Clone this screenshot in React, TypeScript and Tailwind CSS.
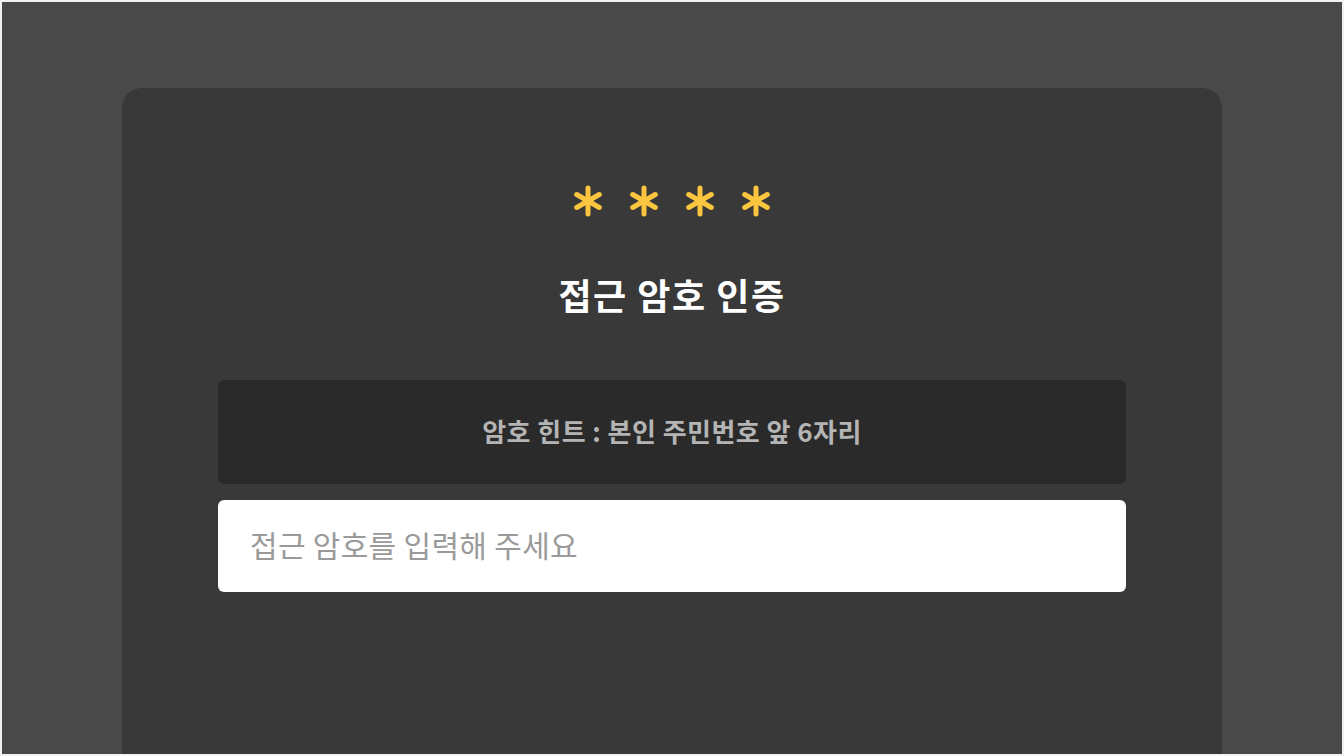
import { useState } from "react";

function Star() {
  return (
    <svg width="32" height="32" viewBox="0 0 32 32" className="text-[#fcc53f]">
      <g stroke="currentColor" strokeWidth="5" strokeLinecap="round">
        <line x1="16" y1="3" x2="16" y2="29" />
        <line x1="4.7" y1="9.5" x2="27.3" y2="22.5" />
        <line x1="4.7" y1="22.5" x2="27.3" y2="9.5" />
      </g>
    </svg>
  );
}

export default function App() {
  const [pw, setPw] = useState("");

  return (
    <div
      className="h-[756px] w-[1344px] overflow-hidden border-2 border-[#f2f2f2] bg-[#494949]"
      style={{ fontFamily: '"Noto Sans CJK KR", "Noto Sans", sans-serif' }}
    >
      <div className="mx-[120px] mt-[86px] h-[700px] rounded-[20px] bg-[#393939] px-[96px] pt-[97px]">
        <div className="flex justify-center gap-[24px]">
          <Star />
          <Star />
          <Star />
          <Star />
        </div>
        <h1 className="mt-[57px] text-center text-[36px] leading-[40px] font-bold tracking-[1.5px] text-white">
          접근 암호 인증
        </h1>
        <div className="mt-[66px] flex h-[104px] items-center justify-center rounded-[6px] bg-[#2a2a2a] pb-[4px]">
          <p className="text-[26px] font-bold tracking-[0.45px] text-[#b4b4b4]">
            암호 힌트 : 본인 주민번호 앞 6자리
          </p>
        </div>
        <input
          type="password"
          value={pw}
          onChange={(e) => setPw(e.target.value)}
          placeholder="접근 암호를 입력해 주세요"
          className="mt-[16px] block h-[92px] w-full rounded-[6px] bg-white px-[32px] pb-[5px] text-[30px] tracking-[0.3px] text-[#333] outline-none placeholder:text-[#9a9a9a]"
        />
      </div>
    </div>
  );
}
